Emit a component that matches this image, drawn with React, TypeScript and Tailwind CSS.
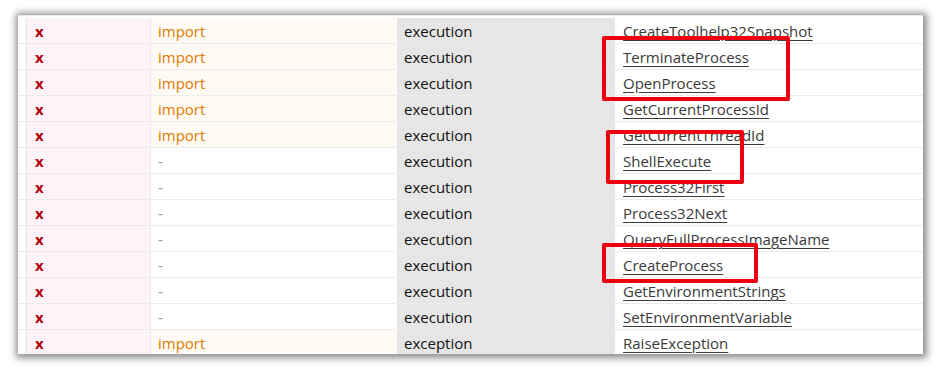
import React from "react";

const rows: [boolean, string, string][] = [
  [true, "execution", "CreateToolhelp32Snapshot"],
  [true, "execution", "TerminateProcess"],
  [true, "execution", "OpenProcess"],
  [true, "execution", "GetCurrentProcessId"],
  [true, "execution", "GetCurrentThreadId"],
  [false, "execution", "ShellExecute"],
  [false, "execution", "Process32First"],
  [false, "execution", "Process32Next"],
  [false, "execution", "QueryFullProcessImageName"],
  [false, "execution", "CreateProcess"],
  [false, "execution", "GetEnvironmentStrings"],
  [false, "execution", "SetEnvironmentVariable"],
  [true, "exception", "RaiseException"],
];

export default function App() {
  return (
    <div className="w-[944px] h-[372px] bg-white relative overflow-hidden" style={{ fontFamily: '"Open Sans", "Noto Sans", sans-serif' }}>
      <div className="absolute left-[18px] top-[15px] w-[905px] h-[339px] bg-white shadow-[1px_1px_7px_3px_rgba(0,0,0,0.45)] overflow-hidden">
        <div className="flex flex-col pt-[2px] border-t border-[#e8e8e8]">
          {rows.map(([imp, cat, fn], i) => (
            <div key={i} className="flex h-[26px] border-b border-[#ebebeb] text-[15px] leading-[26px]">
              <div className="w-[9px] border-r border-[#e4e4e4] bg-white" />
              <div className="w-[124px] bg-[#fdf3f8] border-r border-[#efe8ea] pl-[8px] text-[#b3000c] font-bold text-[15px]">x</div>
              <div className={`w-[246px] pl-[7px] ${imp ? "bg-[#fffaf4] text-[#e27a00]" : "bg-white text-[#9a9a9a]"}`}>{imp ? "import" : "-"}</div>
              <div className="w-[218px] bg-[#e6e6e6] pl-[7px] text-[#111]">{cat}</div>
              <div className="flex-1 pl-[8px] text-[#3a3a3a] underline underline-offset-[3px]">{fn}</div>
            </div>
          ))}
        </div>
      </div>
      <div className="absolute left-[602px] top-[36px] w-[188px] h-[65px] border-[4px] border-[#ee0010] rounded-[2px]" />
      <div className="absolute left-[606px] top-[130px] w-[138px] h-[54px] border-[4px] border-[#ee0010] rounded-[2px]" />
      <div className="absolute left-[602px] top-[243px] w-[156px] h-[40px] border-[4px] border-[#ee0010] rounded-[2px]" />
    </div>
  );
}
